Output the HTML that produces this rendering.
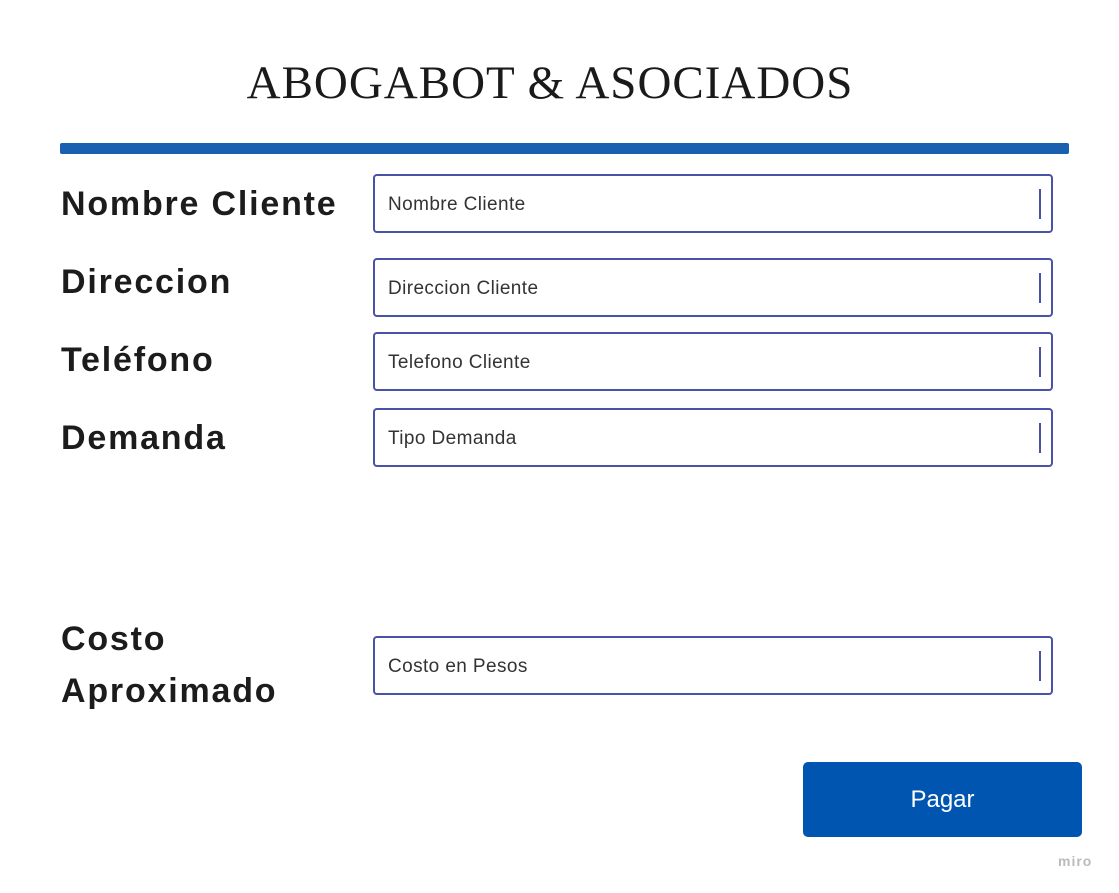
<!DOCTYPE html>
<html><head><style>
body{margin:0;width:1119px;height:893px;background:#fff;position:relative;overflow:hidden;font-family:"Liberation Sans",sans-serif}
.t{position:absolute;left:0;width:1100px;top:56px;text-align:center;font-family:"Liberation Serif",serif;font-size:47px;color:#1a1a1a;letter-spacing:1px}
.bar{position:absolute;left:60px;top:143px;width:1009px;height:11px;background:#1a5fb0;border-radius:2px}
.l{position:absolute;left:61px;font-weight:bold;font-size:34px;color:#1c1c1c;line-height:52px;letter-spacing:1.8px}
.i{position:absolute;left:373px;width:676px;height:55px;border:2px solid #4a52a8;border-radius:4px}
.i span{position:absolute;left:13px;top:2px;line-height:54px;font-size:19px;color:#333;letter-spacing:0.4px}
.i b{position:absolute;right:10px;top:13px;width:2px;height:30px;background:#4a52a8}
.btn{position:absolute;left:803px;top:762px;width:279px;height:75px;background:#0055b0;border-radius:5px;color:#fff;font-size:24px;text-align:center;line-height:75px}
.m{position:absolute;left:1058px;top:853px;font-size:14px;color:#bbb;font-weight:bold;letter-spacing:1px}
</style></head><body>
<div class="t">ABOGABOT &amp; ASOCIADOS</div>
<div class="bar"></div>
<div class="l" style="top:178px">Nombre Cliente</div>
<div class="l" style="top:256px">Direccion</div>
<div class="l" style="top:334px">Teléfono</div>
<div class="l" style="top:412px">Demanda</div>
<div class="l" style="top:613px">Costo<br>Aproximado</div>
<div class="i" style="top:174px"><span>Nombre Cliente</span><b></b></div>
<div class="i" style="top:258px"><span>Direccion Cliente</span><b></b></div>
<div class="i" style="top:332px"><span>Telefono Cliente</span><b></b></div>
<div class="i" style="top:408px"><span>Tipo Demanda</span><b></b></div>
<div class="i" style="top:636px"><span>Costo en Pesos</span><b></b></div>
<div class="btn">Pagar</div>
<div class="m">miro</div>
</body></html>
